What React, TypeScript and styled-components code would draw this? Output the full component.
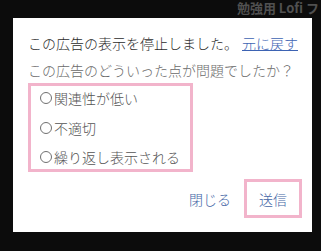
import styled, { createGlobalStyle } from 'styled-components';

const GlobalStyle = createGlobalStyle`
  html, body {
    margin: 0;
    padding: 0;
    background: #0c0c0c;
  }
  body {
    font-family: "Noto Sans CJK JP", "Noto Sans", sans-serif;
  }
`;

const Page = styled.div`
  width: 321px;
  height: 251px;
  overflow: hidden;
  background: #0c0c0c;
  display: flex;
  flex-direction: column;
`;

const TopStrip = styled.div`
  height: 18px;
  box-sizing: border-box;
  padding: 1px 2px 0 0;
  display: flex;
  justify-content: flex-end;
  white-space: nowrap;
  color: #505050;
  font-size: 13px;
  line-height: 14px;
  font-weight: bold;
  font-family: "Noto Sans CJK JP", "Liberation Sans", sans-serif;
`;

const Dialog = styled.div`
  margin-left: 13px;
  width: 299px;
  height: 214px;
  box-sizing: border-box;
  background: #ffffff;
  padding: 15px 13px 0 15px;
  display: flex;
  flex-direction: column;
  font-weight: 300;
`;

const Notice = styled.div`
  font-size: 14px;
  line-height: 20px;
  color: #2b2b2b;
  white-space: nowrap;
`;

const Undo = styled.a`
  color: #3d63b3;
  text-decoration: underline;
  margin-left: 4px;
  cursor: pointer;
`;

const Question = styled.div`
  margin-top: 7px;
  font-size: 14px;
  line-height: 20px;
  color: #6a6a6a;
  white-space: nowrap;
`;

const Highlight = styled.div`
  outline: 3px solid #f2b4cb;
`;

const Options = styled(Highlight)`
  margin: 6px 0 0 3px;
  width: 159px;
  height: 83px;
  padding-left: 9px;
  box-sizing: border-box;
  display: flex;
  flex-direction: column;
  gap: 5.5px;
`;

const Option = styled.label`
  height: 24px;
  display: flex;
  align-items: center;
  gap: 2px;
  font-size: 14px;
  color: #555555;
  white-space: nowrap;
`;

const Radio = styled.span`
  width: 10px;
  height: 10px;
  border: 1px solid #707070;
  border-radius: 50%;
`;

const Actions = styled.div`
  margin-top: 13px;
  display: flex;
  justify-content: flex-end;
  gap: 11px;
`;

const ActionButton = styled.button<{ $marked?: boolean }>`
  width: 52px;
  height: 33px;
  padding: 0;
  border: none;
  background: transparent;
  font-family: inherit;
  font-weight: 300;
  font-size: 14px;
  color: #4466a6;
  cursor: pointer;
  outline: ${(p) => (p.$marked ? '3px solid #f2b4cb' : 'none')};
`;

const reasons = ['関連性が低い', '不適切', '繰り返し表示される'];

export default function App() {
  return (
    <>
      <GlobalStyle />
      <Page>
        <TopStrip>勉強用 Lofi フ</TopStrip>
        <Dialog>
          <Notice>
            この広告の表示を停止しました。
            <Undo>元に戻す</Undo>
          </Notice>
          <Question>この広告のどういった点が問題でしたか？</Question>
          <Options>
            {reasons.map((r) => (
              <Option key={r}>
                <Radio />
                {r}
              </Option>
            ))}
          </Options>
          <Actions>
            <ActionButton>閉じる</ActionButton>
            <ActionButton $marked>送信</ActionButton>
          </Actions>
        </Dialog>
      </Page>
    </>
  );
}
